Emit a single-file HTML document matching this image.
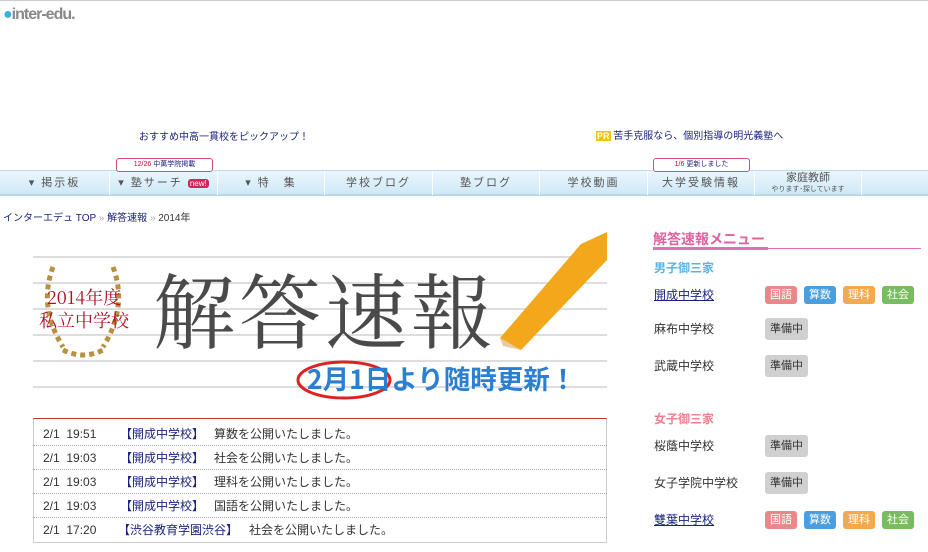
<!DOCTYPE html>
<html><head><meta charset="utf-8"><style>
*{margin:0;padding:0;box-sizing:border-box}
body{width:928px;height:552px;background:#fff;font-family:"Liberation Sans","Noto Sans CJK JP",sans-serif;position:relative;overflow:hidden;color:#333}
.a{position:absolute;white-space:nowrap}
.nav{position:absolute;left:0;top:170px;width:928px;height:26px;background:linear-gradient(#eaf6fd,#cfe9f7);border-top:1px solid #bcdcef;border-bottom:2px solid #b5d8ec}
.nav div{position:absolute;top:0;height:24px;line-height:24px;font-size:11px;color:#555;text-align:center;border-right:1px solid #fff;letter-spacing:2px}
.tip{position:absolute;height:14px;line-height:12px;font-size:7px;color:#c03;border:1px solid #d05080;border-radius:3px;background:#fff;text-align:center}
.row{position:absolute;left:33px;width:574px;height:24px;border-bottom:1px dotted #aaa;font-size:12px;line-height:24px;color:#333}
.row span{position:absolute}
.row b{position:absolute;font-weight:normal;color:#1a237e}
.tag{position:absolute;width:32px;height:18px;border-radius:3px;color:#fff;font-size:11px;line-height:18px;text-align:center}
.g{background:#d0d0d0;color:#333;width:43px;height:22px;line-height:22px}
.sc{position:absolute;left:654px;font-size:12px;color:#333}
.sc.l{color:#1a237e;text-decoration:underline}
</style></head><body>
<div style="position:absolute;left:0;top:0;width:928px;height:1px;background:#ccc"></div>
<div class="a" style="left:3px;top:6px;font-size:16px;color:#888;font-weight:bold;letter-spacing:-1px"><span style="color:#3ab0e0">&#9679;</span>inter-edu.</div>
<div class="a" style="left:139px;top:128px;font-size:10px;color:#1a237e">おすすめ中高一貫校をピックアップ！</div>
<div class="a" style="left:596px;top:127px;font-size:10px;color:#1a237e"><span style="background:#f5c400;color:#fff;font-size:9px;padding:0 1px;font-weight:bold">PR</span> 苦手克服なら、個別指導の明光義塾へ</div>
<div class="nav">
<div style="left:0;width:110px">▾ 掲示板</div>
<div style="left:110px;width:108px">▾ 塾サーチ <span style="background:#d0245a;color:#fff;font-size:8px;border-radius:3px;padding:0 2px;letter-spacing:0">new!</span></div>
<div style="left:218px;width:107px">▾ 特　集</div>
<div style="left:325px;width:108px">学校ブログ</div>
<div style="left:433px;width:107px">塾ブログ</div>
<div style="left:540px;width:108px">学校動画</div>
<div style="left:648px;width:107px">大学受験情報</div>
<div style="left:755px;width:107px;line-height:10px;padding-top:2px;letter-spacing:0">家庭教師<br><span style="font-size:7px">やります･探しています</span></div>
</div>
<div class="tip" style="left:116px;top:158px;width:97px">12/26 <span style="color:#1a237e">中萬学院掲載</span></div>
<div class="tip" style="left:653px;top:158px;width:97px">1/6 <span style="color:#1a237e">更新しました</span></div>
<div class="a" style="left:3px;top:209px;font-size:10px;color:#1a237e">インターエデュ TOP <span style="color:#aaa">»</span> 解答速報 <span style="color:#aaa">»</span> <span style="color:#333">2014年</span></div>
<div style="position:absolute;left:33px;top:232px;width:574px;height:176px;background:repeating-linear-gradient(#fff 0,#fff 24px,#ddd 24px,#ddd 26px)"></div>
<svg class="a" style="left:33px;top:232px" width="574" height="176">
<polygon points="467,106 548,12 574,0 574,28 488,118" fill="#f2a81a"/>
<polygon points="467,106 488,118 470,114" fill="#e8c9a0"/>
<path d="M20,35 Q5,75 30,115 M80,35 Q95,75 70,115 M30,118 Q50,128 70,118" fill="none" stroke="#b89040" stroke-width="5" stroke-dasharray="5 4"/>
<text x="51" y="72" font-size="18" fill="#b01020" text-anchor="middle" font-family="Noto Serif CJK SC,serif">2014年度</text>
<text x="51" y="95" font-size="18" fill="#b01020" text-anchor="middle" font-family="Noto Serif CJK SC,serif">私立中学校</text>
<text x="120" y="110" font-size="82" fill="#4a4a4a" font-family="Noto Serif CJK SC,serif" letter-spacing="4">解答速報</text>
<ellipse cx="311" cy="148" rx="46" ry="18" fill="none" stroke="#d22" stroke-width="3"/>
<text x="274" y="157" font-size="26.5" fill="#2b7fd0" font-weight="bold" font-family="Noto Sans CJK JP,sans-serif">2月1日より随時更新！</text>
</svg>
<div style="position:absolute;left:33px;top:418px;width:574px;height:125px;border:1px solid #ccc;border-top:1px solid #c33"></div>
<div class="row" style="top:422px"><span style="left:10px">2/1&nbsp;&nbsp;19:51</span><b style="left:87px">【開成中学校】</b><span style="left:181px">算数を公開いたしました。</span></div>
<div class="row" style="top:446px"><span style="left:10px">2/1&nbsp;&nbsp;19:03</span><b style="left:87px">【開成中学校】</b><span style="left:181px">社会を公開いたしました。</span></div>
<div class="row" style="top:470px"><span style="left:10px">2/1&nbsp;&nbsp;19:03</span><b style="left:87px">【開成中学校】</b><span style="left:181px">理科を公開いたしました。</span></div>
<div class="row" style="top:494px"><span style="left:10px">2/1&nbsp;&nbsp;19:03</span><b style="left:87px">【開成中学校】</b><span style="left:181px">国語を公開いたしました。</span></div>
<div class="row" style="top:518px;border:none"><span style="left:10px">2/1&nbsp;&nbsp;17:20</span><b style="left:85px">【渋谷教育学園渋谷】</b><span style="left:216px">社会を公開いたしました。</span></div>
<div class="a" style="left:653px;top:229px;font-size:14px;font-weight:bold;color:#e060a0">解答速報メニュー</div>
<div style="position:absolute;left:653px;top:248px;width:268px;height:1px;background:#e070b0"></div>
<div style="position:absolute;left:653px;top:247px;width:115px;height:3px;background:#e070b0"></div>
<div class="a" style="left:654px;top:259px;font-size:12px;font-weight:bold;color:#5ab4e0">男子御三家</div>
<div class="sc l" style="top:286px">開成中学校</div>
<div class="tag" style="left:765px;top:286px;background:#e88888">国語</div><div class="tag" style="left:804px;top:286px;background:#4a9ee0">算数</div><div class="tag" style="left:843px;top:286px;background:#f4a850">理科</div><div class="tag" style="left:882px;top:286px;background:#78bb60">社会</div>
<div class="sc" style="top:320px">麻布中学校</div><div class="tag g" style="left:765px;top:318px">準備中</div>
<div class="sc" style="top:357px">武蔵中学校</div><div class="tag g" style="left:765px;top:355px">準備中</div>
<div class="a" style="left:654px;top:410px;font-size:12px;font-weight:bold;color:#f08090">女子御三家</div>
<div class="sc" style="top:437px">桜蔭中学校</div><div class="tag g" style="left:765px;top:435px">準備中</div>
<div class="sc" style="top:474px">女子学院中学校</div><div class="tag g" style="left:765px;top:472px">準備中</div>
<div class="sc l" style="top:511px">雙葉中学校</div>
<div class="tag" style="left:765px;top:511px;background:#e88888">国語</div><div class="tag" style="left:804px;top:511px;background:#4a9ee0">算数</div><div class="tag" style="left:843px;top:511px;background:#f4a850">理科</div><div class="tag" style="left:882px;top:511px;background:#78bb60">社会</div>
</body></html>
